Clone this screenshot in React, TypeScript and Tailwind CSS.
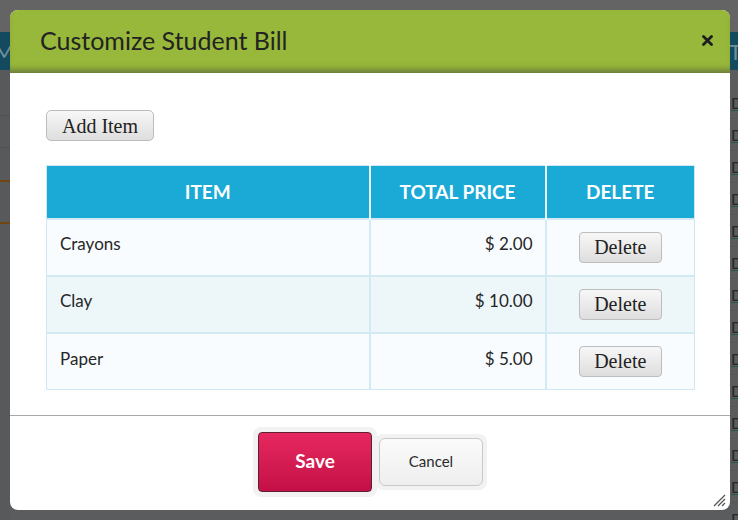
import React from "react";

const sans = { fontFamily: "Lato, 'Open Sans', sans-serif" };
const serif = { fontFamily: "'Liberation Serif', 'Times New Roman', serif" };

const rows = [
  { item: "Crayons", price: "$ 2.00" },
  { item: "Clay", price: "$ 10.00" },
  { item: "Paper", price: "$ 5.00" },
];

function BackgroundPage() {
  const bgRows = Array.from({ length: 14 });
  return (
    <div className="flex flex-col w-[738px] h-[520px] bg-[#5b5c5d]" style={sans}>
      <div className="h-[32px] shrink-0 bg-[#646464]" />
      <div className="h-[38px] shrink-0 bg-[#134a5f] flex items-center justify-between text-[#6f8f9b] text-[22px]">
        <span className="-ml-[6px]">M</span>
        <span className="mr-[-4px]">T</span>
      </div>
      <div className="flex flex-1">
        <div className="w-[10px] flex flex-col bg-[#58595a]">
          <div className="h-[46px] border-b border-[#4f5152]" />
          <div className="h-[32px] border-b border-[#4f5152]" />
          <div className="h-[34px] border-b-[2px] border-[#70450f]" />
          <div className="h-[42px] border-b-[2px] border-[#70450f]" />
        </div>
        <div className="flex-1" />
        <div className="w-[8px] flex flex-col">
          <div className="h-[17px] shrink-0" />
          {bgRows.map((_, i) => (
            <div key={i} className="h-[32px] shrink-0 flex items-center border-b border-[#535556]">
              <span className="text-[#262626] text-[16px] leading-none underline decoration-[#1f5b4f] ml-[1px] whitespace-nowrap">
                Dr
              </span>
            </div>
          ))}
        </div>
      </div>
    </div>
  );
}

function CloseIcon() {
  return (
    <svg width="11" height="11" viewBox="0 0 11 11">
      <path d="M1.5 1.5 L9.5 9.5 M9.5 1.5 L1.5 9.5" stroke="#1e1e1e" strokeWidth="2.8" strokeLinecap="round" />
    </svg>
  );
}

function ResizeIcon() {
  return (
    <svg width="14" height="14" viewBox="0 0 14 14">
      <path d="M2 13 L13 2 M6 13 L13 6 M10 13 L13 10" stroke="#555" strokeWidth="1.3" />
    </svg>
  );
}

export default function App() {
  return (
    <div className="relative w-[738px] h-[520px] overflow-hidden">
      <BackgroundPage />
      <div
        className="absolute left-[10px] top-[10px] w-[720px] h-[500px] bg-white rounded-[8px] overflow-hidden flex flex-col"
        style={sans}
      >
        <div className="h-[63px] shrink-0 bg-[#97b83a] flex items-center justify-between pl-[30px] pr-[17px] pb-[2px] shadow-[inset_0_-7px_6px_-4px_rgba(60,60,60,0.55)]">
          <h1 className="text-[25px] text-[#232323] leading-none">Customize Student Bill</h1>
          <CloseIcon />
        </div>
        <div className="flex-1 px-[36px] pt-[37px]">
          <button
            className="w-[108px] h-[31px] rounded-[5px] border border-[#bdbdbd] bg-gradient-to-b from-[#f7f7f7] to-[#dedede] text-[20px] text-[#222] leading-none flex items-center justify-center"
            style={serif}
          >
            Add Item
          </button>
          <table className="mt-[24px] w-[648px] border-collapse border border-[#cfe8f1] table-fixed">
            <colgroup>
              <col className="w-[323px]" />
              <col className="w-[176px]" />
              <col className="w-[149px]" />
            </colgroup>
            <thead>
              <tr className="h-[53px] bg-[#1ba9d6] text-white text-[19px] font-bold">
                <th className="border-r-[2px] border-[#e8f6fb] font-bold">ITEM</th>
                <th className="border-r-[2px] border-[#e8f6fb] font-bold">TOTAL PRICE</th>
                <th className="font-bold">DELETE</th>
              </tr>
            </thead>
            <tbody>
              {rows.map((r, i) => (
                <tr
                  key={r.item}
                  className={`h-[57px] border-t-[2px] border-[#d3eaf2] ${i % 2 === 1 ? "bg-[#edf6f9]" : "bg-[#f9fcfe]"}`}
                >
                  <td className="pl-[13px] text-[17px] text-[#262626] border-r-[2px] border-[#d3eaf2] pb-[6px]">{r.item}</td>
                  <td className="pr-[12px] text-right text-[17px] text-[#262626] border-r-[2px] border-[#d3eaf2] pb-[6px]">
                    {r.price}
                  </td>
                  <td>
                    <div className="flex justify-center">
                      <button
                        className="w-[83px] h-[31px] rounded-[4px] border border-[#bdbdbd] bg-gradient-to-b from-[#f7f7f7] to-[#dedede] text-[20px] text-[#222] leading-none flex items-center justify-center"
                        style={serif}
                      >
                        Delete
                      </button>
                    </div>
                  </td>
                </tr>
              ))}
            </tbody>
          </table>
        </div>
        <div className="relative h-[95px] shrink-0 border-t border-[#a9a9a9] flex items-center justify-center pb-[3px]">
          <div className="p-[5px] rounded-[8px] bg-[#f2f2f2]">
            <button className="w-[114px] h-[60px] rounded-[4px] border border-[#5c2030] bg-gradient-to-b from-[#e6285f] to-[#c40f47] text-white text-[19px] font-bold">
              Save
            </button>
          </div>
          <div className="p-[4px] rounded-[8px] bg-[#f2f2f2] ml-[-2px]">
            <button className="w-[104px] h-[48px] rounded-[6px] border border-[#c9c9c9] bg-gradient-to-b from-[#fbfbfb] to-[#eeeeee] text-[#2a2a2a] text-[15px]">
              Cancel
            </button>
          </div>
          <div className="absolute right-[4px] bottom-[3px]">
            <ResizeIcon />
          </div>
        </div>
      </div>
    </div>
  );
}
